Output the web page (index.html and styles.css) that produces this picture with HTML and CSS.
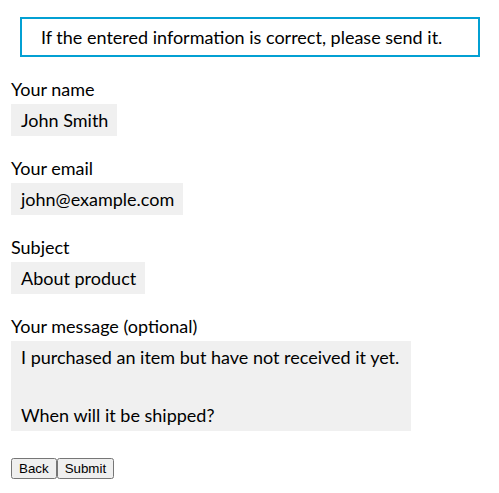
FILE: index.html
```html
<!DOCTYPE html>
<html lang="en">
<head>
<meta charset="utf-8">
<title>Confirm</title>
<link rel="stylesheet" href="styles.css">
</head>
<body>
<p class="notice">If the entered information is correct, please send it.</p>
<form class="confirm">
  <div class="field">
    <div class="label">Your name</div>
    <div class="value">John Smith</div>
  </div>
  <div class="field">
    <div class="label">Your email</div>
    <div class="value">john@example.com</div>
  </div>
  <div class="field">
    <div class="label">Subject</div>
    <div class="value">About product</div>
  </div>
  <div class="field">
    <div class="label">Your message (optional)</div>
    <div class="value message">
      <p class="line">I purchased an item but have not received it yet.</p>
      <p class="line gap">When will it be shipped?</p>
    </div>
  </div>
  <div class="actions"><button type="button" class="btn">Back</button><button type="submit" class="btn">Submit</button></div>
</form>
</body>
</html>
```
FILE: styles.css
```css
body {
  margin: 8px;
  font-family: Lato, "Open Sans", sans-serif;
  font-size: 18px;
  line-height: 24px;
  color: #000;
  background: #fff;
}

.notice {
  width: 460px;
  box-sizing: border-box;
  margin: 9px 0 20px 12px;
  padding: 6px 18px 6px 19px;
  border: 2px solid #03a0d3;
}

.confirm {
  margin: 0;
  padding-left: 3px;
}

.field {
  margin-bottom: 20px;
}

.label {
  margin-bottom: 3px;
}

.value {
  display: inline-block;
  vertical-align: top;
  background: #f0f0f0;
  padding: 4px 9px 4px 10px;
  white-space: nowrap;
}

.message {
  display: block;
  width: fit-content;
  padding-right: 12px;
}

.line {
  margin: 0;
}

.gap {
  margin-top: 34px;
}

.actions {
  display: flex;
  margin-top: 27px;
}

.btn {
  font: 13.333px "Liberation Sans", Arial, sans-serif;
  margin: 0;
}
```
